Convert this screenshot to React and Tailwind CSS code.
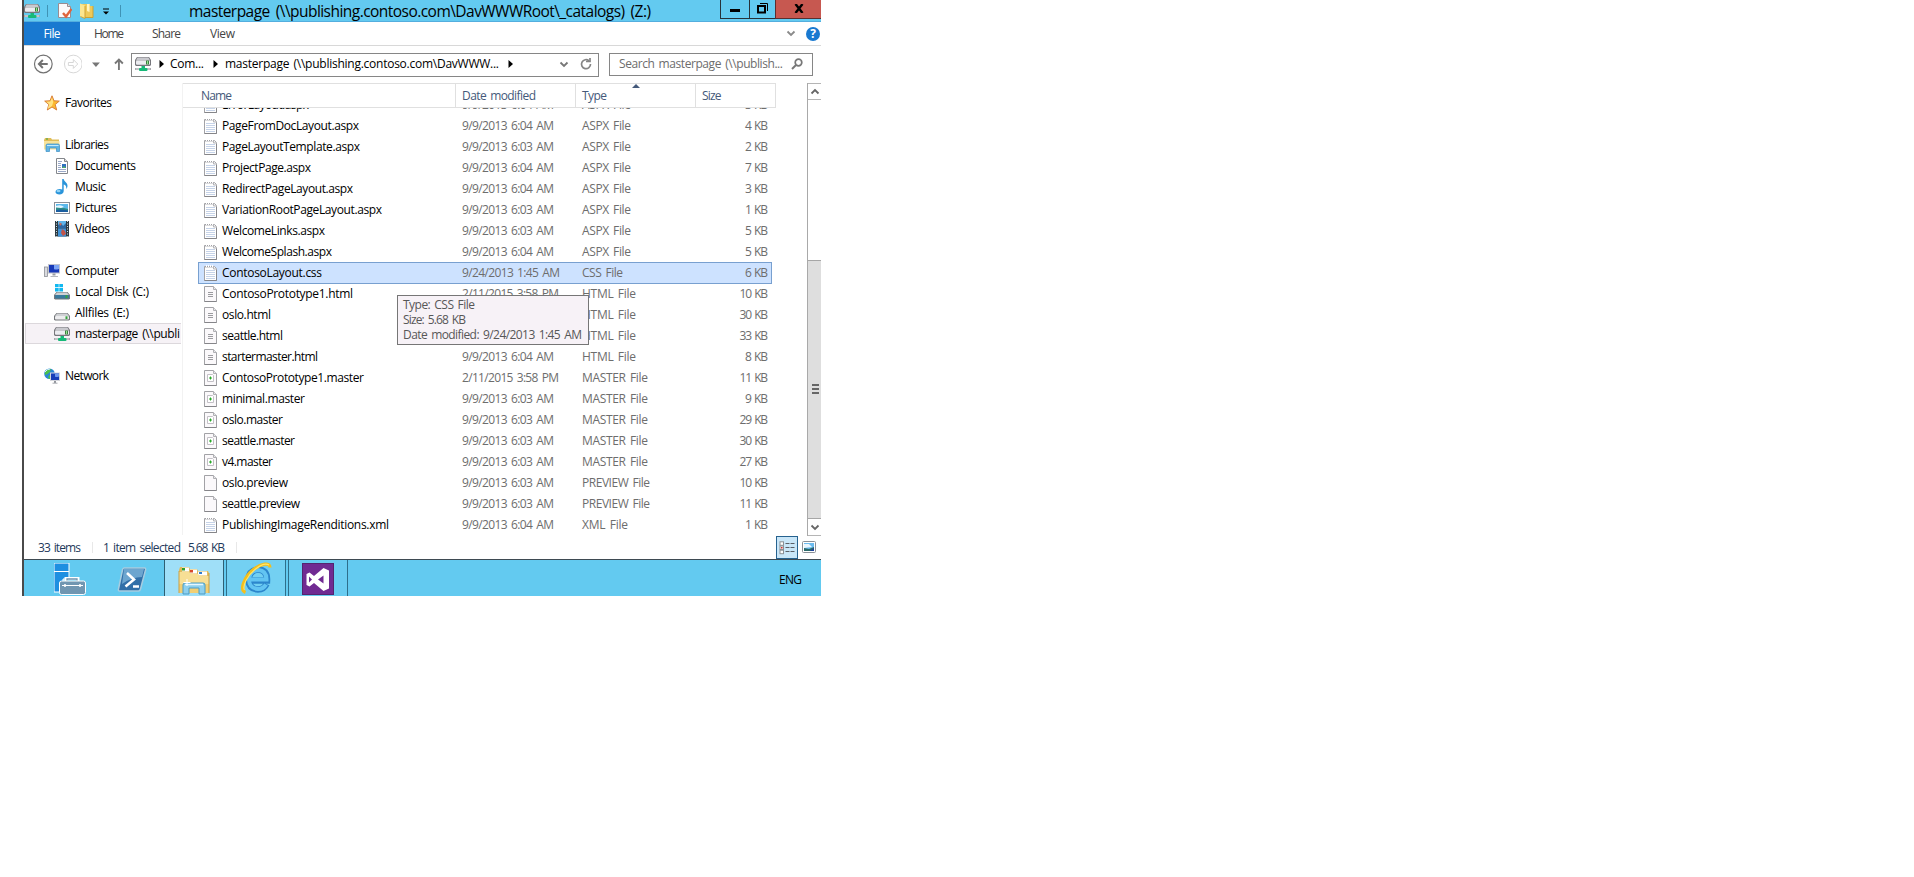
import React, { useLayoutEffect, useRef, useState } from "react";

/* One line of text, tracked so that it fills the given width in pixels. */
function Text({ w, className = "", children }) {
  const ref = useRef(null);
  const [spacing, setSpacing] = useState(null);
  useLayoutEffect(() => {
    const n = String(children).length - 1;
    const natural = ref.current.getBoundingClientRect().width;
    setSpacing((w - natural) / n);
  }, []);
  return (
    <span
      ref={ref}
      className={"inline-block shrink-0 whitespace-pre [word-spacing:1.5px] " + className}
      style={spacing === null ? undefined : { letterSpacing: spacing + "px", marginRight: -spacing + "px" }}
    >
      {children}
    </span>
  );
}

function NetDrive({ className = "" }) {
  return (
    <svg viewBox="0 0 16 16" className={"h-4 w-4 shrink-0 " + className}>
      <path d="M2 1h12l2 3v5l-1 1H1L0 9V4z" fill="#77777c" />
      <path d="M2.500 1.500h11l1.500 3H1z" fill="#c9c9ce" />
      <rect x="1" y="4.500" width="14" height="4.300" rx="1" fill="#ececf0" />
      <rect x="11" y="4.500" width="3" height="4" fill="#3c7f3c" />
      <rect x="12" y="5" width="1" height="3" fill="#8fe58f" />
      <path d="M0 12h16v2H0z" fill="#a9aaae" />
      <path d="M1 13h14" stroke="#dcdcdf" />
      <rect x="6.500" y="10" width="3.500" height="4" fill="#17b978" />
      <rect x="4" y="12" width="8.500" height="3" rx="1" fill="#17b978" />
    </svg>
  );
}

function Drive({ win }) {
  return (
    <svg viewBox="0 0 16 16" className="h-4 w-4 shrink-0">
      {win ? (
        <g fill="#12b8f0">
          <rect x="1" y="0" width="3.700" height="3.200" />
          <rect x="5.300" y="0" width="3.700" height="3.200" />
          <rect x="1" y="4" width="3.700" height="3.500" />
          <rect x="5.300" y="4" width="3.700" height="3.500" />
        </g>
      ) : null}
      <path d="M2.500 8h11l2.500 3v3.500l-1 1H1l-1-1V11z" fill="#75777b" />
      <path d="M3 8.500h10l2 2.500H1z" fill="#cfd1d4" />
      <rect x="1" y="11" width="14" height="3.500" rx="1" fill={win ? "#397a9d" : "#ececee"} />
      <rect x="11.500" y="11.300" width="2" height="2.800" fill="#35a43c" />
    </svg>
  );
}

function Star() {
  return (
    <svg viewBox="0 0 16 16" className="h-4 w-4 shrink-0">
      <path d="M8 .8l2 5 5.300.3-4.100 3.400 1.500 5.500L8 12l-4.700 3 1.500-5.500L.7 6.100 6 5.800z" fill="#fdb92e" stroke="#d9803c" strokeWidth="1" />
      <path d="M8 2.500L9.300 7 8 11 3.500 14l1.600-4.700L2 6.800l4.300-.3z" fill="#fff0a0" opacity=".75" />
    </svg>
  );
}

function Libraries() {
  return (
    <svg viewBox="0 0 16 16" className="h-4 w-4 shrink-0">
      <path d="M0 3L1 1h6l1 1.500h7V12H0z" fill="#e0bd58" />
      <rect x="2" y="1.500" width="2" height="1" fill="#3da53d" />
      <path d="M0 4h15.500v8.500H0z" fill="#f7e39b" />
      <path d="M2 14.500V8.500Q2 7 3.500 7H14q1.500 0 1.500 1.500v6h-3V11h-7v3.500z" fill="#62b5e4" stroke="#3c8fc4" strokeWidth=".7" />
      <path d="M3 8.500h11.500" stroke="#c5eafb" />
    </svg>
  );
}

function Documents() {
  return (
    <svg viewBox="0 0 16 16" className="h-4 w-4 shrink-0">
      <path d="M2.500.5h8l3 3v12h-11z" fill="#fff" stroke="#84878c" />
      <path d="M10.500.5v3h3" fill="#ddd" stroke="#84878c" />
      <path d="M4 3.500h4M4 5.500h3M4 7.500h3M4 9.500h3M4 11.500h8M4 13.500h8" stroke="#9aa9c8" />
      <rect x="8" y="6" width="4" height="4" fill="#2f6fc0" />
      <path d="M8 10l2-2 2 2z" fill="#50b060" />
    </svg>
  );
}

function Music() {
  return (
    <svg viewBox="0 0 16 16" className="h-4 w-4 shrink-0">
      <path d="M8.200 0h1.500c.3 2.500 4 3.500 3.800 7-.1 1.500-.8 2.500-1.300 3 .5-2.500-.5-4-2.500-4.500V12c0 2-1.800 3.500-4.200 3.500S1.500 14.400 1.500 13c0-2 2-3 4.200-3 1 0 1.800.2 2.500.5z" fill="#2a94da" />
      <ellipse cx="4.500" cy="12" rx="2" ry="1.300" fill="#8fd2f5" />
    </svg>
  );
}

function Pictures() {
  return (
    <svg viewBox="0 0 16 16" className="h-4 w-4 shrink-0">
      <rect x=".5" y="2.500" width="15" height="11" fill="#fff" stroke="#8b9099" />
      <rect x="2" y="4" width="12" height="8" fill="#5cb8ea" />
      <path d="M2 7q6 0 12 2v3H2z" fill="#2d8d86" />
      <path d="M2 6q5-2 8 1l-3 1-5-.5z" fill="#e6f6ff" />
      <path d="M2 10q6-1 12 .5V12H2z" fill="#1b5ea0" />
    </svg>
  );
}

function Videos() {
  return (
    <svg viewBox="0 0 16 16" className="h-4 w-4 shrink-0">
      <rect x="1" y="0" width="14" height="15.500" fill="#2d3a42" />
      <rect x="4" y="0" width="8" height="7.500" fill="#5fb4ea" />
      <rect x="4" y="8" width="8" height="7.500" fill="#3f92d6" />
      <path d="M4 4l3-2 2 3 3-3v5.500H4z" fill="#2b67a3" />
      <path d="M8 8l3 2 1 3-3 2-2-3z" fill="#c25448" />
      <path d="M5 1l3 2-2 2z" fill="#cc6b55" />
      <path d="M2.500 0v15.500M13.500 0v15.500" stroke="#cfe3ea" strokeDasharray="1 1.500" />
    </svg>
  );
}

function Computer() {
  return (
    <svg viewBox="0 0 16 16" className="h-4 w-4 shrink-0">
      <rect x=".5" y="4" width="3" height="9.500" fill="#d9dadf" stroke="#8c8f96" strokeWidth=".8" />
      <rect x="4" y="1" width="12" height="9.500" fill="#c0c3ce" />
      <rect x="5" y="2" width="10" height="7.500" fill="#1839b8" />
      <path d="M10 2h5v4q-4 1-5 0z" fill="#7da5f5" />
      <rect x="8.500" y="10.500" width="3" height="2" fill="#9a9da4" />
      <path d="M6.500 13h7.500v1h-7.500z" fill="#b5b7bd" />
    </svg>
  );
}

function Network() {
  return (
    <svg viewBox="0 0 16 16" className="h-4 w-4 shrink-0">
      <circle cx="5.500" cy="5.800" r="5.300" fill="#2a86d6" />
      <path d="M2 2.500q2-2 5-1.500L6 4 3.500 6 1 7q-.5-3 1-4.500zM5 7l3 1-2 3-2-1z" fill="#4cc04a" />
      <path d="M1 4q2-3 5-3" stroke="#d7f2ff" fill="none" />
      <rect x="6" y="4.500" width="10" height="8.500" fill="#d3d5dc" />
      <rect x="7" y="5.500" width="8" height="6.500" fill="#173db8" />
      <path d="M11 5.500h4v3q-3 1-4 0z" fill="#6d97ee" />
      <rect x="10" y="13" width="2" height="2" fill="#92959c" />
      <path d="M8.500 15.200h5" stroke="#a9abb1" />
    </svg>
  );
}

function FileIcon({ kind }) {
  if (kind === "note") {
    return (
      <svg viewBox="0 0 13 16" className="h-4 w-[13px] shrink-0">
        <path d="M.5 1.500h10l2 2v12H.5z" fill="#fff" stroke="#a2a2a6" />
        <path d="M.5 15.500h12V5" fill="none" stroke="#858589" />
        <path d="M2 1h8" stroke="#fff" strokeWidth="2" strokeDasharray="1 1" />
        <path d="M1.500 2.500h8" stroke="#b5b5b9" strokeDasharray="1 1" />
        <path d="M9.500 1.500v2.500h3" fill="#eee" stroke="#b5b5b9" />
        <path d="M2 5.500h9M2 7.500h9M2 9.500h9M2 11.500h9M2 13.500h9" stroke="#c6d3e8" />
      </svg>
    );
  }
  return (
    <svg viewBox="0 0 13 16" className="h-4 w-[13px] shrink-0">
      <path d="M.5.5h9l3 3v12H.5z" fill="#fbf9fb" stroke="#a2a2a6" />
      <path d="M.5 15.500h12" stroke="#858589" />
      <path d="M9.500.5v3h3" fill="#e8e8ea" stroke="#b0b0b4" />
      {kind === "html" ? <path d="M4 6.500h5M4 8.500h5M4 10.500h5" stroke="#9b9b9f" /> : null}
      {kind === "master" ? (
        <g>
          <path d="M3.500 4.500h5l1 1v6h-6z" fill="#fff" stroke="#c3c0c6" />
          <path d="M6.500 6.500v3M5 8h3" stroke="#28a828" />
        </g>
      ) : null}
    </svg>
  );
}

const FILES = [
  ["note", "ErrorLayout.aspx", 87, "9/9/2013 6:04 AM", 91, "ASPX File", 48, "3 KB"],
  ["note", "PageFromDocLayout.aspx", 137, "9/9/2013 6:04 AM", 91, "ASPX File", 48, "4 KB"],
  ["note", "PageLayoutTemplate.aspx", 138, "9/9/2013 6:03 AM", 91, "ASPX File", 48, "2 KB"],
  ["note", "ProjectPage.aspx", 89, "9/9/2013 6:04 AM", 91, "ASPX File", 48, "7 KB"],
  ["note", "RedirectPageLayout.aspx", 131, "9/9/2013 6:04 AM", 91, "ASPX File", 48, "3 KB"],
  ["note", "VariationRootPageLayout.aspx", 160, "9/9/2013 6:03 AM", 91, "ASPX File", 48, "1 KB"],
  ["note", "WelcomeLinks.aspx", 103, "9/9/2013 6:03 AM", 91, "ASPX File", 48, "5 KB"],
  ["note", "WelcomeSplash.aspx", 110, "9/9/2013 6:04 AM", 91, "ASPX File", 48, "5 KB"],
  ["note", "ContosoLayout.css", 100, "9/24/2013 1:45 AM", 97, "CSS File", 40, "6 KB"],
  ["html", "ContosoPrototype1.html", 131, "2/11/2015 3:58 PM", 96, "HTML File", 53, "10 KB"],
  ["html", "oslo.html", 49, "9/9/2013 6:04 AM", 91, "HTML File", 53, "30 KB"],
  ["html", "seattle.html", 61, "9/9/2013 6:04 AM", 91, "HTML File", 53, "33 KB"],
  ["html", "startermaster.html", 96, "9/9/2013 6:04 AM", 91, "HTML File", 53, "8 KB"],
  ["master", "ContosoPrototype1.master", 142, "2/11/2015 3:58 PM", 96, "MASTER File", 65, "11 KB"],
  ["master", "minimal.master", 83, "9/9/2013 6:03 AM", 91, "MASTER File", 65, "9 KB"],
  ["master", "oslo.master", 61, "9/9/2013 6:03 AM", 91, "MASTER File", 65, "29 KB"],
  ["master", "seattle.master", 73, "9/9/2013 6:03 AM", 91, "MASTER File", 65, "30 KB"],
  ["master", "v4.master", 51, "9/9/2013 6:03 AM", 91, "MASTER File", 65, "27 KB"],
  ["blank", "oslo.preview", 66, "9/9/2013 6:03 AM", 91, "PREVIEW File", 67, "10 KB"],
  ["blank", "seattle.preview", 78, "9/9/2013 6:03 AM", 91, "PREVIEW File", 67, "11 KB"],
  ["note", "PublishingImageRenditions.xml", 167, "9/9/2013 6:04 AM", 91, "XML File", 45, "1 KB"],
];

function FileRow({ file }) {
  const [kind, name, nameW, date, dateW, type, typeW, size] = file;
  const selected = name === "ContosoLayout.css";
  return (
    <div
      className={
        "flex w-[574px] shrink-0 items-center border pl-[5px] " +
        (selected ? "-mb-px h-[22px] border-[#78a0d0] bg-[#cde2ff]" : "h-[21px] border-transparent")
      }
    >
      <div className="flex w-[258px] items-center gap-[5px]">
        <FileIcon kind={kind} />
        <Text w={nameW} className="text-black">{name}</Text>
      </div>
      <div className="w-[120px]"><Text w={dateW + 1}>{date}</Text></div>
      <div className="w-[120px]"><Text w={typeW + 1}>{type}</Text></div>
      <div className="flex flex-1 justify-end pr-[3px]"><Text w={size.length === 5 ? 28.5 : 23}>{size}</Text></div>
    </div>
  );
}

function NavRow({ icon, label, w, nested, selected }) {
  return (
    <div
      className={
        "flex h-[21px] shrink-0 items-center gap-[5px] overflow-hidden border " +
        (nested ? "pl-[28px] " : "pl-[18px] ") +
        (selected ? "border-r-0 border-[#dcd8dc] bg-[#f6f2f6]" : "border-transparent")
      }
    >
      {icon}
      <Text w={w}>{label}</Text>
    </div>
  );
}

function Chevron({ up, className = "" }) {
  return (
    <svg viewBox="0 0 10 7" className={"h-[7px] w-[10px] shrink-0 " + className} fill="none" stroke="currentColor" strokeWidth="1.8">
      <path d={up ? "M1.500 5.500L5 2l3.500 3.500" : "M1.500 1.500L5 5l3.500-3.500"} />
    </svg>
  );
}

function Crumb() {
  return (
    <svg viewBox="0 0 5 8" className="h-2 w-[5px] shrink-0">
      <path d="M.5 0L5 4 .5 8z" fill="#000" />
    </svg>
  );
}

function TitleBar() {
  return (
    <div className="flex h-[22px] shrink-0 border-b border-[#54aede] bg-[#63caf0]">
      <div className="flex h-[21px] w-[165px] items-center">
        <NetDrive />
        <div className="ml-[7px] h-[12px] w-px bg-[#3f93b5]" />
        <svg viewBox="0 0 14 16" className="ml-[10px] mt-px h-4 w-[14px]">
          <path d="M.5.5h9l3 3v11H.5z" fill="#fdfafa" stroke="#9a8c90" />
          <path d="M9.500.5v3h3" fill="#ddd" stroke="#9a8c90" />
          <path d="M5 10l3 3.500L13.500 6" fill="none" stroke="#e0643c" strokeWidth="2.400" />
        </svg>
        <svg viewBox="0 0 14 16" className="ml-2 mt-px h-4 w-[14px]">
          <path d="M0 1h10v2h3v11.500H4z" fill="#edc95a" />
          <path d="M0 .5l5 2v13L0 13.500z" fill="#fbe68f" />
          <path d="M7 1h2.500v8L7 8z" fill="#fff3bd" />
          <path d="M5 3v12.500M.5 13.500L5 15.500M13 3v11.500H5" fill="none" stroke="#c99d2c" strokeWidth=".9" />
        </svg>
        <svg viewBox="0 0 8 8" className="ml-[8px] mt-[3px] h-2 w-2">
          <path d="M1 1h6" stroke="#000" />
          <path d="M1 3.500h6L4 6.500z" fill="#000" />
        </svg>
        <div className="ml-[10px] h-[12px] w-px bg-[#3f93b5]" />
      </div>
      <div className="flex h-[21px] flex-1 items-center text-[15.500px] text-black">
        <Text w={462} className="[word-spacing:2.5px]">{"masterpage (\\\\publishing.contoso.com\\DavWWWRoot\\_catalogs) (Z:)"}</Text>
      </div>
      <div className="flex h-[19px]">
        <div className="flex w-[29px] items-center justify-center border-b border-l border-[#27323a]">
          <div className="mt-[3px] h-[3px] w-[10px] bg-black" />
        </div>
        <div className="flex w-[26px] items-center justify-center border-b border-l border-[#27323a]">
          <svg viewBox="0 0 11 11" className="mb-[2px] h-[11px] w-[11px]" fill="none" stroke="#000">
            <path d="M3 .5h7.500V8" />
            <rect x="1" y="3" width="7" height="6.500" strokeWidth="2" />
          </svg>
        </div>
        <div className="flex w-[46px] items-center justify-center border-b border-l border-[#5a2f30] bg-[#c75850]">
          <svg viewBox="0 0 10 9" className="mb-[2px] h-[9px] w-[10px]" stroke="#000" strokeWidth="2.400">
            <path d="M1.500 0l7 9M8.500 0l-7 9" />
          </svg>
        </div>
      </div>
    </div>
  );
}

function Ribbon() {
  return (
    <div className="flex h-6 shrink-0 border-b border-[#d8d8d8] bg-white text-[#444]">
      <div className="flex h-[23px] w-14 items-center justify-center bg-[#1979d0] text-white"><Text w={17}>File</Text></div>
      <div className="flex flex-1 items-center pt-px">
        <div className="w-[58px] pl-[14px]"><Text w={30}>Home</Text></div>
        <div className="w-[57px] pl-[14px]"><Text w={29}>Share</Text></div>
        <div className="pl-[15px]"><Text w={25}>View</Text></div>
      </div>
      <div className="flex items-center gap-[10px] pr-px">
        <Chevron className="text-[#8a8a8a]" />
        <div className="flex h-[14px] w-[14px] items-center justify-center rounded-full bg-[#1979d0] text-[12px] font-bold leading-none text-white">?</div>
      </div>
    </div>
  );
}

function AddressRow() {
  return (
    <div className="flex h-[37px] shrink-0 items-center pb-px pr-2">
      <svg viewBox="0 0 20 20" className="ml-[9px] h-5 w-5" fill="none" stroke="#727272">
        <circle cx="10.500" cy="10" r="9" strokeWidth="1.200" />
        <path d="M15 10H6.500M10 6l-4 4 4 4" strokeWidth="2" />
      </svg>
      <svg viewBox="0 0 20 20" className="ml-[10px] h-5 w-5" fill="none" stroke="#d6d6d6">
        <circle cx="10.500" cy="10" r="9" strokeWidth="1" />
        <path d="M5.500 8.500h5V5.500L15 10l-4.500 4.500v-3h-5z" />
      </svg>
      <svg viewBox="0 0 8 5" className="ml-[10px] h-[5px] w-2"><path d="M0 .5h8L4 5z" fill="#777" /></svg>
      <svg viewBox="0 0 10 12" className="ml-[14px] h-3 w-[10px]" fill="none" stroke="#777" strokeWidth="1.900">
        <path d="M5 12V1.500M1 5.500l4-4 4 4" />
      </svg>
      <div className="ml-[7px] mt-px flex h-6 w-[468px] shrink-0 items-center border border-[#868686] pb-px pl-[3px] text-black">
        <NetDrive />
        <div className="ml-2"><Crumb /></div>
        <div className="ml-[6px]"><Text w={34}>Com...</Text></div>
        <div className="ml-[9px]"><Crumb /></div>
        <div className="ml-[7px] flex-1"><Text w={274}>{"masterpage (\\\\publishing.contoso.com\\DavWWW..."}</Text></div>
        <Crumb />
        <div className="ml-[46px]"><Chevron className="text-[#777]" /></div>
        <svg viewBox="0 0 12 12" className="ml-[11px] mr-[6px] h-3 w-3 shrink-0" fill="none" stroke="#858585" strokeWidth="1.700">
          <path d="M9 2.800A4.500 4.500 0 1 0 10.500 6" />
          <path d="M6 3.500h4V0" />
        </svg>
      </div>
      <div className="ml-[10px] flex h-[23px] w-[204px] shrink-0 items-center justify-between border border-[#868686] pl-[9px] pr-[9px] text-[#6d6d6d]">
        <Text w={164}>{"Search masterpage (\\\\publish..."}</Text>
        <svg viewBox="0 0 12 12" className="h-3 w-3" fill="none" stroke="#777">
          <circle cx="7.500" cy="4.500" r="3.300" strokeWidth="1.700" />
          <path d="M5 7L1 11" strokeWidth="2" />
        </svg>
      </div>
    </div>
  );
}

function NavPane() {
  return (
    <div className="flex w-[157px] shrink-0 flex-col overflow-hidden pl-px pt-[9px] text-black">
      <NavRow icon={<Star />} label="Favorites" w={47} />
      <div className="h-[21px]" />
      <NavRow icon={<Libraries />} label="Libraries" w={44} />
      <NavRow nested icon={<Documents />} label="Documents" w={61} />
      <NavRow nested icon={<Music />} label="Music" w={31} />
      <NavRow nested icon={<Pictures />} label="Pictures" w={42} />
      <NavRow nested icon={<Videos />} label="Videos" w={35} />
      <div className="h-[21px]" />
      <NavRow icon={<Computer />} label="Computer" w={54} />
      <NavRow nested icon={<Drive win />} label="Local Disk (C:)" w={74} />
      <NavRow nested icon={<Drive />} label="Allfiles (E:)" w={54} />
      <NavRow nested selected icon={<NetDrive />} label={"masterpage (\\\\publi"} w={105} />
      <div className="h-[21px]" />
      <NavRow icon={<Network />} label="Network" w={44} />
    </div>
  );
}

function Tooltip() {
  return (
    <div className="absolute left-[214px] top-[212px] flex h-[50px] w-[192px] flex-col border border-[#767676] bg-[#f7f2f7] pl-[5px] pt-px leading-[15px] text-[#575757]">
      <Text w={72} className="self-start">Type: CSS File</Text>
      <Text w={63} className="self-start">Size: 5.68 KB</Text>
      <Text w={179} className="self-start">Date modified: 9/24/2013 1:45 AM</Text>
    </div>
  );
}

function FileList() {
  return (
    <div className="relative flex w-[624px] shrink-0 flex-col border-l border-[#f2f2f2]">
      <div className="flex h-[25px] w-[593px] shrink-0 border-b border-r border-t border-[#e0e0e0] text-[#44597a]">
        <div className="flex w-[273px] items-center border-r border-[#e0e0e0] pl-[18px]"><Text w={31}>Name</Text></div>
        <div className="flex w-[120px] items-center border-r border-[#e0e0e0] pl-[6px]"><Text w={74}>Date modified</Text></div>
        <div className="relative flex w-[120px] items-center border-r border-[#e0e0e0] pl-[6px]">
          <Text w={25}>Type</Text>
          <svg viewBox="0 0 8 4" className="absolute left-[56px] top-0 h-1 w-2"><path d="M4 0l4 4H0z" fill="#44597a" /></svg>
        </div>
        <div className="flex items-center pl-[6px]"><Text w={19.5}>Size</Text></div>
      </div>
      <div className="flex h-[427px] flex-col overflow-hidden pl-[15px] text-[#6d6d6d]">
        <div className="-mt-[14px] flex flex-col">
          {FILES.map((f) => <FileRow key={f[1]} file={f} />)}
        </div>
      </div>
      <Tooltip />
    </div>
  );
}

function ScrollBar() {
  return (
    <div className="ml-auto flex h-[453px] w-[14px] flex-col border-l border-[#a9a9a9] text-[#666]">
      <div className="flex h-[17px] items-center justify-center border-b border-t border-[#b5b5b5] pl-px"><Chevron up /></div>
      <div className="h-[160px]" />
      <div className="flex h-[259px] flex-col items-center justify-center gap-px border-b border-t border-[#a6a6a6] bg-[#dedede] pb-px pl-px">
        <div className="h-[2px] w-[7px] bg-[#666]" />
        <div className="mt-px h-[2px] w-[7px] bg-[#666]" />
        <div className="mt-px h-[2px] w-[7px] bg-[#666]" />
      </div>
      <div className="flex h-[17px] items-center justify-center border-b border-[#b5b5b5] pl-px"><Chevron /></div>
    </div>
  );
}

function StatusBar() {
  return (
    <div className="flex h-[23px] shrink-0 items-center pl-[14px] text-[#1e395b]">
      <Text w={43}>33 items</Text>
      <div className="ml-[11px] h-[11px] w-px bg-[#e8e8e8]" />
      <div className="ml-[10px]"><Text w={78}>1 item selected</Text></div>
      <div className="ml-[7px]"><Text w={37}>5.68 KB</Text></div>
      <div className="ml-[11px] h-[11px] w-px bg-[#e8e8e8]" />
      <div className="ml-auto flex h-[23px] w-[22px] items-center justify-center border border-[#26628f] bg-[#c9e6f8]">
        <svg viewBox="0 0 16 14" className="h-[14px] w-4" fill="none">
          <g fill="#fff" stroke="#8b8f94">
            <rect x="1" y=".8" width="3.500" height="3.500" />
            <rect x="1" y="5" width="3.500" height="3.500" />
            <rect x="1" y="9.200" width="3.500" height="3.500" />
          </g>
          <path d="M2 6.700h1.600" stroke="#d03030" strokeWidth="1.500" />
          <path d="M6.500 2.500h4M11.500 2.500h4M6.500 6.500h4M11.500 6.500h4M6.500 10.500h4M11.500 10.500h4" stroke="#5a5f66" />
        </svg>
      </div>
      <svg viewBox="0 0 14 12" className="mb-[2px] ml-1 mr-[5px] h-3 w-[14px]">
        <rect x=".5" y=".5" width="13" height="11" rx="1" fill="#fff" stroke="#8a9097" />
        <rect x="2" y="2" width="10" height="8" fill="#6cbcf0" />
        <path d="M2 3h5l3 3-8 1z" fill="#eaf7ff" />
        <path d="M2 7l5 1 5-2v4H2z" fill="#2a6a6a" />
        <path d="M8 10l4-3v3z" fill="#1b3f9a" />
      </svg>
    </div>
  );
}

function TaskBar() {
  return (
    <div className="flex h-[37px] shrink-0 border-t border-[#3e4a52] bg-[#63caf0]">
      <div className="flex w-[140px] items-start">
        <svg viewBox="0 0 32 32" className="ml-[30px] mt-[3px] h-8 w-8">
          <path d="M0 0h15v16H9v13H0z" fill="#1e8fe1" stroke="#fff" strokeWidth="1" />
          <path d="M0 8.500h15" stroke="#fff" />
          <path d="M12 18v-2.500h12V18" fill="none" stroke="#fff" strokeWidth="3" />
          <path d="M13 18v-2h10v2" fill="none" stroke="#6f93ae" strokeWidth="1.300" />
          <rect x="5.500" y="18" width="26" height="13.500" rx="2" fill="#7196b1" stroke="#fff" />
          <path d="M8 22.500h21" stroke="#fff" />
          <path d="M11 21v3M26 21v3" stroke="#fff" strokeWidth="1.500" />
        </svg>
        <svg viewBox="0 0 30 26" className="ml-[31px] mt-[7px] h-[26px] w-[30px]">
          <path d="M7 1h20.500q1.500 0 1 2l-5 19q-.5 2-2 2H2.500Q1 24 1.500 22l4-19Q6 1 7 1z" fill="#316fa8" stroke="#a8cde0" strokeWidth="1.500" />
          <path d="M7 2h20l-2 8q-10 0-20 7z" fill="#6ca5cf" />
          <path d="M10 6l7 6.500L8.500 19.500M16 19.500h6" fill="none" stroke="#fff" strokeWidth="2.600" />
        </svg>
      </div>
      <div className="flex w-[60px] border-l border-r border-[#2e5f73] bg-[#9fdff8] pl-[13px] pt-[6px]">
        <svg viewBox="0 0 32 29" className="h-[29px] w-8">
          <path d="M1 4l1-3h9l1 2h7l1 2h10l1 2v20H1z" fill="#e2bb5b" />
          <path d="M4 1.500h7v4H4z" fill="#fff" /><path d="M4 2h3v2.500H4z" fill="#2f9e2f" />
          <path d="M12 3.500h7v4h-7z" fill="#fff" /><path d="M12 4h3v2.500h-3z" fill="#d94a2a" />
          <path d="M20 5.500h9v4h-9z" fill="#fff" /><path d="M21 6h3v2h-3z" fill="#2e7cd0" />
          <path d="M1 6h10l2 2h7l2 2h9v17H1z" fill="#f7df95" />
          <path d="M1 18h30v9H1z" fill="#f1cf74" />
          <path d="M1 27V5M31 27V7" stroke="#c99f45" />
          <path d="M5 28V19q0-2 2-2h18q2 0 2 2v9h-6v-6H11v6z" fill="#8dd0ee" stroke="#4a9cc5" />
          <path d="M7 18.500h18" stroke="#e4f7ff" strokeWidth="1.500" />
          <path d="M9 13v7M5.500 16.500h7" stroke="#fff" />
        </svg>
      </div>
      <div className="ml-[2px] flex w-[60px] border-l border-r border-[#2e6f8b] bg-[#73d0f2] pl-[14px] pt-[2px]">
        <svg viewBox="0 0 32 32" className="h-8 w-8" fill="none">
          <path d="M25.500 22Q23 27.500 17 27.500 8 27 7.500 18 8 8 17 7.500 26.500 8 26 18.500H9" stroke="#2c86cc" strokeWidth="6.500" />
          <path d="M25 22.500Q22.500 27 17 27 8.500 26.500 8 18 8.500 8.500 17 8 25.500 8.500 25.500 17.500H10" stroke="#62c4f2" strokeWidth="4" />
          <path d="M4.500 30.500C-2 28 3.500 14 13 7 20 1.500 29 0 29 5.500" stroke="#f4bf1c" strokeWidth="3.200" />
          <path d="M3.500 28C1 24 7 13 14 7.500 19 3.500 25 1 28 3" stroke="#ffe56d" strokeWidth="1.100" />
        </svg>
      </div>
      <div className="ml-[2px] flex w-[60px] border-l border-r border-[#2e6f8b] bg-[#69ccf1] pl-[13px] pt-[3px]">
        <div className="h-8 w-8 border border-[#54246f] bg-[#702a92]">
          <svg viewBox="0 0 30 30" className="h-[30px] w-[30px]">
            <path d="M20.500 4l5.500 2.500v18L20.500 27l-9.500-8-4.500 3.500L3.500 21V10l3-1.500 4.500 3.500zM20.500 11.500l-5.500 4 5.500 4zM6 12.500v6l3-3z" fill="#fff" fillRule="evenodd" />
          </svg>
        </div>
      </div>
      <div className="ml-auto flex items-center pr-[19px] pt-[3px] text-black"><Text w={23}>ENG</Text></div>
    </div>
  );
}

export default function App() {
  return (
    <div className="min-h-[877px] bg-white pl-[22px] font-['Open_Sans','Noto_Sans',sans-serif] text-[12px] leading-[18px]">
      <div className="flex h-[596px] w-[799px] flex-col overflow-hidden border-l-2 border-[#4a4a4a] bg-white">
        <TitleBar />
        <Ribbon />
        <AddressRow />
        <div className="flex h-[453px] shrink-0">
          <NavPane />
          <div className="ml-[1px]"><FileList /></div>
          <ScrollBar />
        </div>
        <StatusBar />
        <TaskBar />
      </div>
    </div>
  );
}
